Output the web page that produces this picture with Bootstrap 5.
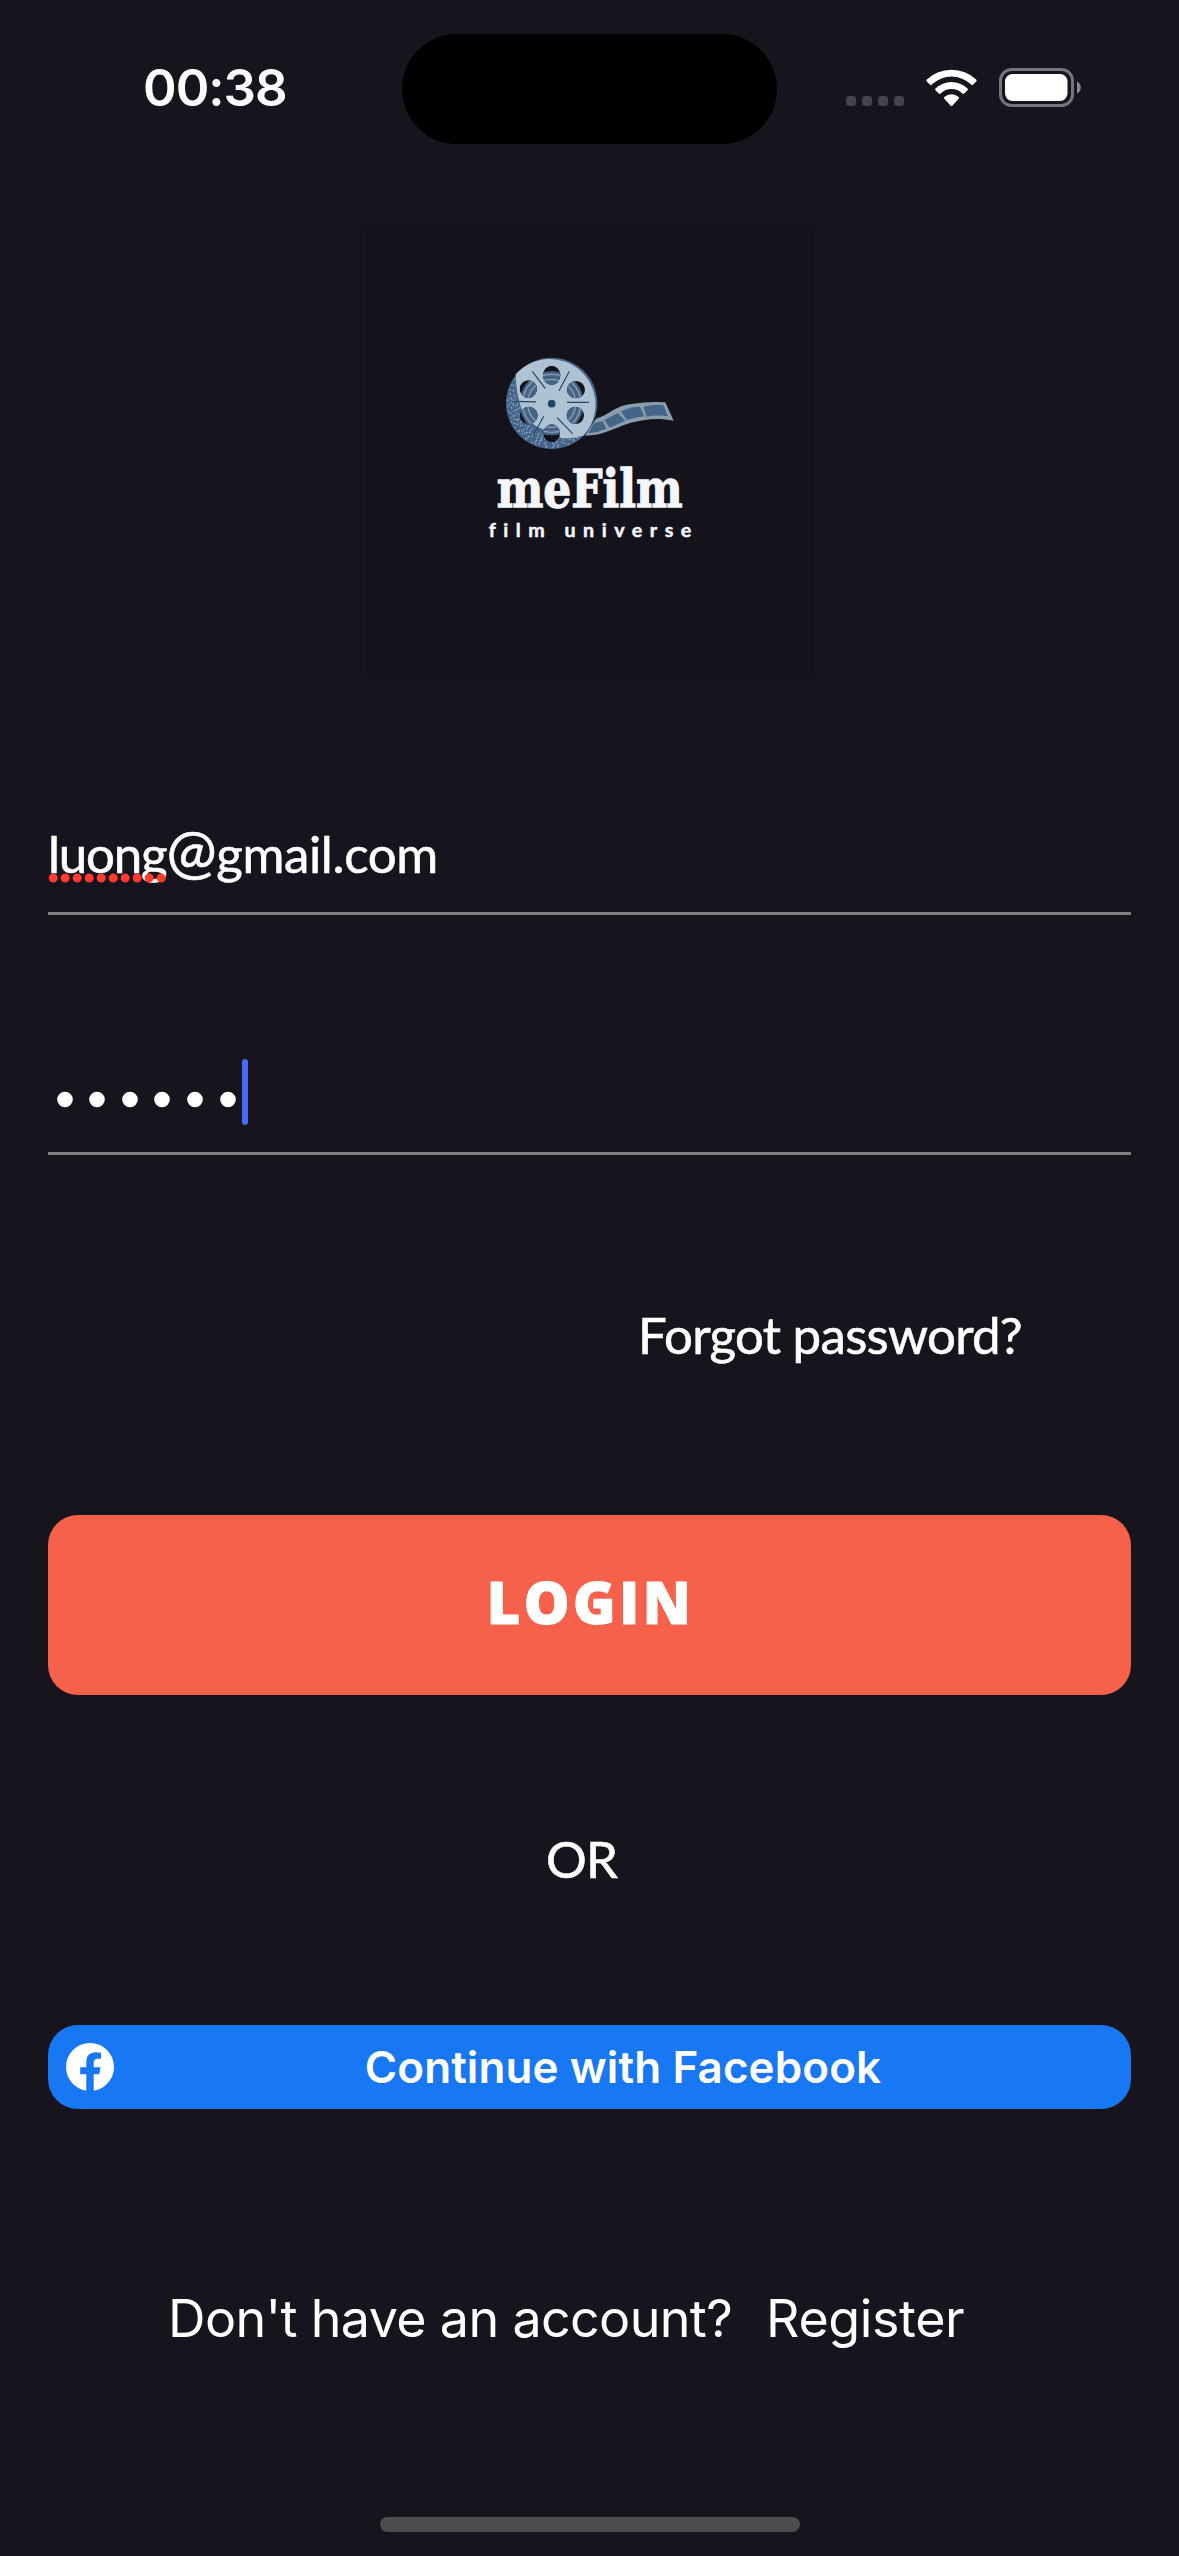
<!DOCTYPE html>
<html lang="en">
<head>
<meta charset="utf-8">
<meta name="viewport" content="width=device-width, initial-scale=1">
<title>meFilm</title>
<link href="https://cdn.jsdelivr.net/npm/bootstrap@5.3.0/dist/css/bootstrap.min.css" rel="stylesheet">
<style>
body{background:#17141e;color:#fff;font-family:Inter,sans-serif}
.screen{width:1179px;height:2556px;overflow:hidden}
.status-bar{height:225px;padding-top:34px}
.side{width:402px;height:110px}
.clock{font-size:51px;font-weight:600;line-height:60px;letter-spacing:-1px;padding:24px 0 0 143px}
.island{width:375px;height:110px;border-radius:55px;background:#000}
.logo-box{width:450px;height:450px;background:#14131c;padding:115px 0 0 105px}
.logo-box svg{overflow:visible}
.form-area{padding:0 48px}
.human{font-family:Lato,sans-serif;font-size:51px;line-height:60px;-webkit-text-stroke:.6px #fff}
.line-field{border-bottom:3px solid gray;height:240px}
.email-field{padding-bottom:28px;letter-spacing:-.35px}
.at-sign{font-size:60px;line-height:1px}
.misspelt{position:relative;letter-spacing:-1.2px}
.misspelt svg{position:absolute;left:0;bottom:1px}
.pw-field{padding-bottom:27px}
.forgot{margin-top:150px;padding-right:109px;letter-spacing:-.7px}
.btn-main{height:180px;margin-top:150px;border-radius:30px;background:#f5614a;color:#fff;font:800 57.500px/60px "Open Sans",sans-serif;letter-spacing:3.500px;padding:0 0 6px 2px;-webkit-text-stroke:1px #fff}
.or-text{margin:134px 0 0 -16px;height:60px;letter-spacing:-1px}
.btn-fb{height:84px;margin-top:136px;border-radius:30px;background:#1877f2;color:#fff;padding:0 18px;font-size:44px;font-weight:600;letter-spacing:.1px}
.fb-label{padding-left:19px}
.signup{font-size:52px;line-height:60px;margin-top:180px;padding-left:168px;gap:34px;letter-spacing:-.4px}
.ask{letter-spacing:-.65px}
.home-bar{width:420px;height:15px;border-radius:8px;background:#4d4d4d;margin-top:168px}
.tagline{font-variant-ligatures:none}
</style>
<script src="https://cdn.jsdelivr.net/npm/bootstrap@5.3.0/dist/js/bootstrap.bundle.min.js"></script>
</head>
<body>
<main class="screen d-flex flex-column">
  <header class="status-bar d-flex flex-shrink-0">
    <div class="side"><div class="clock">00:38</div></div>
    <div class="island"></div>
    <svg width="402" height="110" viewBox="777 34 402 110">
      <g fill="#45434d"><rect x="846" y="96" width="10" height="10" rx="3.5"/><rect x="862" y="96" width="10" height="10" rx="3.5"/><rect x="878" y="96" width="10" height="10" rx="3.5"/><rect x="894" y="96" width="10" height="10" rx="3.5"/></g>
      <g fill="#fff"><path d="M926.8 79.5a36 36 0 0 1 49.4 0q1 1 0 2l-3 3q-1 1-2 0a28.500 28.500 0 0 0-39.400 0q-1 1-2 0l-3-3q-1-1 0-2z"/><path d="M935.500 88.500a23 23 0 0 1 32 0q.8.9 0 1.800l-3.200 3.200q-1 .9-2 0a15.500 15.500 0 0 0-21.600 0q-1 .9-2 0l-3.200-3.200q-.8-.9 0-1.800z"/><path d="M944.300 97a10.800 10.800 0 0 1 14.400 0q.8.9 0 1.800l-6.200 6.600q-1 1-2 0l-6.200-6.600q-.8-.9 0-1.800z"/></g>
      <rect x="1000.500" y="69.500" width="72" height="36" rx="11" fill="none" stroke="#77757c" stroke-width="3"/>
      <rect x="1005" y="74" width="62.500" height="27" rx="7.500" fill="#fff"/><path d="M1077 81.500c5 2 5 10 0 12z" fill="#8b8990"/>
    </svg>
  </header>
  <section class="logo-box align-self-center flex-shrink-0">
    <svg width="240" height="210" viewBox="0 0 720 630" role="img" aria-label="meFilm logo" class="d-block">
      <defs>
        <clipPath id="holes"><ellipse cx="245" cy="106" rx="26" ry="29"/><ellipse cx="175" cy="147" rx="26" ry="26"/><ellipse cx="318" cy="149" rx="27" ry="26"/><ellipse cx="176" cy="226" rx="27" ry="26"/><ellipse cx="316" cy="226" rx="26" ry="26"/><ellipse cx="245" cy="280" rx="25" ry="27"/></clipPath>
        <clipPath id="shade"><path d="M137 103C132 160 145 200 165 238C200 270 250 292 345 289A137 137 0 0 1 110 160Z"/></clipPath>
      </defs>
      <path d="M378 236C425 222 430 197 490 191Q535 184 586 187L611 242C560 232 520 239 480 249C430 265 400 287 345 287Z" fill="#8b9dad"/>
      <g fill="#456489"><path d="M372 249L398 244L409 266Q385 277 355 280Z"/><path d="M403 240L444 219L466 242L419 263Z"/><path d="M453 215Q476 200 510 200L523 229Q493 232 471 240Z"/><path d="M520 200Q550 193 580 195L594 229Q560 224 530 230Z"/></g>
      <circle cx="245" cy="190" r="137" fill="#456489"/>
      <path d="M137 103A137 137 0 1 1 340 287Q300 298 270 293Q265 265 220 268C190 258 165 235 155 210Q138 160 137 103Z" fill="#afc2d3"/>
      <g clip-path="url(#shade)" fill="none" stroke="#afc2d3" stroke-width="3.500">
        <circle cx="245" cy="190" r="132" stroke-dasharray="3 17 4 29 3 11"/><circle cx="245" cy="190" r="127" stroke-dasharray="3 9 4 23 3 17"/><circle cx="245" cy="190" r="121" stroke-dasharray="4 13 3 7 4 21"/><circle cx="245" cy="190" r="115" stroke-dasharray="3 16 5 9 3 12"/><circle cx="245" cy="190" r="109" stroke-dasharray="4 8 3 15 3 7"/><circle cx="245" cy="190" r="103" stroke-dasharray="3 9 4 5 3 14"/><circle cx="245" cy="190" r="97" stroke-dasharray="4 10 3 8"/>
      </g>
      <g clip-path="url(#holes)"><rect x="100" y="50" width="290" height="280" fill="#14131c"/><circle cx="245" cy="190" r="96" fill="#456489"/><g fill="none" stroke="#8b9dad" stroke-width="4"><circle cx="245" cy="190" r="87"/><circle cx="245" cy="190" r="72"/></g></g>
      <path d="M187 94L226 146M298 94L267 152M132 184L198 185.500M291 187H357M221 229L190 287M261 233L308 281" stroke="#1f4768" stroke-width="3.500"/>
      <circle cx="245" cy="191" r="11.500" fill="#1f4768"/>
      <text x="80" y="502" textLength="558" lengthAdjust="spacingAndGlyphs" font-family="DejaVu Serif, serif" font-weight="700" font-size="155" fill="#f3f6fb" stroke="#f3f6fb" stroke-width="4">meFilm</text>
      <text class="tagline" x="56" y="591" textLength="608" font-family="Lato, sans-serif" font-weight="700" font-size="59" fill="#f3f6fb" stroke="#f3f6fb" stroke-width="1.500">film universe</text>
    </svg>
  </section>
  <form class="form-area d-flex flex-column flex-shrink-0">
    <div class="line-field email-field d-flex align-items-end human"><span><span class="misspelt">luong<svg width="118" height="10" viewBox="0 0 118 10"><path d="M5.200 5H114" stroke="#ff3b30" stroke-width="9" stroke-linecap="round" stroke-dasharray="0 12"/></svg></span><span class="at-sign">@</span>gmail.com</span></div>
    <div class="line-field pw-field d-flex align-items-end">
      <svg width="210" height="66" viewBox="48 1059 210 66" role="img" aria-label="Password, 6 characters"><g fill="#fff"><circle cx="65" cy="1099.500" r="7.800"/><circle cx="97" cy="1099.500" r="7.800"/><circle cx="130" cy="1099.500" r="7.800"/><circle cx="162" cy="1099.500" r="7.800"/><circle cx="195" cy="1099.500" r="7.800"/><circle cx="228" cy="1099.500" r="7.800"/></g><rect x="242" y="1059" width="6" height="66" rx="3" fill="#456cf4"/></svg>
    </div>
    <div class="forgot human text-end">Forgot password?</div>
    <button type="button" class="btn-main border-0 w-100">LOGIN</button>
    <div class="or-text human text-center">OR</div>
    <button type="button" class="btn-fb border-0 w-100 d-flex align-items-center">
      <svg width="48" height="48" viewBox="0 0 48 48"><circle cx="24" cy="24" r="24" fill="#fff"/><path d="M20.300 48V31.300H14.200V24.300H20.300V19C20.300 12.700 24 9.300 29.700 9.300Q32.500 9.300 35 9.800V15.800H32C28.800 15.800 27.700 17.700 27.700 20V24.300H34.500L33.400 31.300H27.700V48Z" fill="#1877f2"/></svg>
      <span class="fb-label flex-grow-1 text-center">Continue with Facebook</span>
    </button>
  </form>
  <div class="signup d-flex"><span class="ask">Don't have an account?</span><span>Register</span></div>
  <div class="home-bar align-self-center flex-shrink-0"></div>
</main>
</body>
</html>
